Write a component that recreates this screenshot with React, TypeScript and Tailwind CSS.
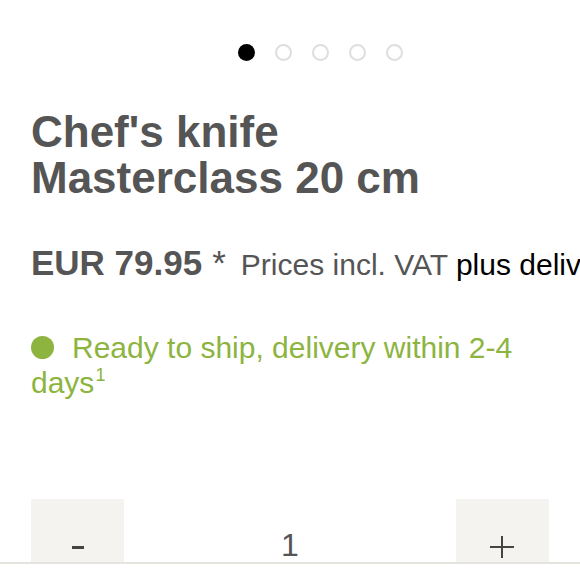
import React from "react";

const dots = [true, false, false, false, false];

function QtyButton({ children }: { children: React.ReactNode }) {
  return (
    <button className="w-[93px] h-[96px] bg-[#f5f3f0] flex items-center justify-center text-[#4a4a4a]">
      {children}
    </button>
  );
}

export default function App() {
  return (
    <div
      className="relative w-[580px] h-[580px] overflow-hidden bg-white"
      style={{ fontFamily: '"Liberation Sans", Arial, sans-serif' }}
    >
      <div className="pt-[44px] pl-[238px] flex gap-[20px]">
        {dots.map((active, i) => (
          <span
            key={i}
            className={
              active
                ? "w-[17px] h-[17px] rounded-full bg-black"
                : "w-[17px] h-[17px] rounded-full border-2 border-[#dedede]"
            }
          />
        ))}
      </div>

      <div className="px-[31px]">
        <h1 className="mt-[48px] text-[44px] leading-[46px] font-bold text-[#555555]">
          Chef's knife
          <br />
          Masterclass 20 cm
        </h1>

        <div className="mt-[42px] leading-[40px] whitespace-nowrap text-[#555555]">
          <span className="text-[35px] font-bold">EUR 79.95</span>
          <span className="text-[35px] ml-[10px]">*</span>
          <span className="text-[30px] ml-[15px]">Prices incl. VAT </span>
          <span className="text-[30px] text-black">plus delivery costs</span>
        </div>

        <p className="mt-[40px] text-[30px] leading-[35px] text-[#8cb43f]">
          <span className="inline-block w-[23px] h-[23px] rounded-full bg-[#8cb43f] mr-[18px] align-[-1px]" />
          Ready to ship, delivery within 2-4 days
          <sup className="text-[18px] -top-[12px] ml-[1px]">1</sup>
        </p>

        <div className="mt-[99px] flex items-center justify-between">
          <QtyButton>
            <svg width="12" height="3" viewBox="0 0 12 3">
              <rect width="12" height="3" fill="#444" />
            </svg>
          </QtyButton>
          <span className="text-[32px] text-[#555555] font-normal -mt-[4px]">1</span>
          <QtyButton>
            <svg width="24" height="22" viewBox="0 0 24 22">
              <rect x="0" y="10" width="24" height="2" fill="#444" />
              <rect x="11" y="0" width="2" height="22" fill="#444" />
            </svg>
          </QtyButton>
        </div>
      </div>

      <div className="absolute left-0 right-0 top-[562px] bottom-0 bg-white border-t-2 border-[#e6e4df]" />
    </div>
  );
}
